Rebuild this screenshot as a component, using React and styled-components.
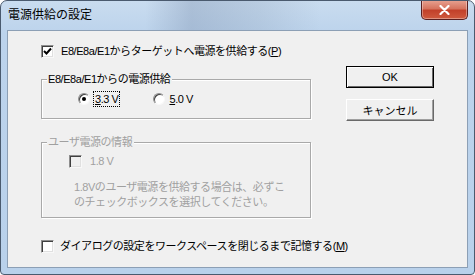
import React from 'react'
import styled, { createGlobalStyle } from 'styled-components'

const GlobalStyle = createGlobalStyle`
  html, body {
    margin: 0;
    padding: 0;
    background: #ffffff;
  }
  body {
    font-family: "Liberation Sans", "Noto Sans CJK JP", sans-serif;
    font-size: 11px;
    letter-spacing: -0.45px;
    color: #000;
  }
`

const Frame = styled.div`
  width: 475px;
  height: 275px;
  box-sizing: border-box;
  border: 1px solid #4a5a6e;
  border-radius: 7px 7px 4px 4px;
  background: linear-gradient(180deg, #c9dcef 0%, #bcd3ec 12%, #b9d1eb 100%);
  display: flex;
  flex-direction: column;
  padding: 0 6px 6px 6px;
  overflow: hidden;
`

const TitleBar = styled.div`
  height: 29px;
  display: flex;
  align-items: flex-start;
  background: linear-gradient(90deg, transparent 0%, transparent 30%, rgba(120,140,170,0.35) 40%, rgba(140,160,185,0.25) 55%, transparent 68%);
`

const Title = styled.div`
  font-size: 12px;
  letter-spacing: 0;
  line-height: 12px;
  margin: 8px 0 0 1px;
  color: #000;
`

const CloseButton = styled.div`
  margin-left: auto;
  margin-top: -1px;
  width: 45px;
  height: 19px;
  border: 1px solid #5a2020;
  border-top: none;
  border-radius: 0 0 5px 5px;
  background: linear-gradient(180deg, #e8a493 0%, #d6745f 45%, #c2412a 55%, #cf5a3e 100%);
  display: flex;
  align-items: center;
  justify-content: center;
  box-shadow: inset 0 0 0 1px rgba(255,255,255,0.35);
`

const Client = styled.div`
  flex: 1;
  border: 1px solid #8c9fb5;
  background: #f0f0f0;
  display: flex;
  flex-direction: column;
  padding: 14px 0 0 33px;
`

const Body = styled.div`
  display: flex;
  align-items: flex-start;
`

const LeftCol = styled.div`
  width: 270px;
  display: flex;
  flex-direction: column;
`

const RightCol = styled.div`
  margin-left: 35px;
  margin-top: 21px;
  display: flex;
  flex-direction: column;
  gap: 11px;
`

const CheckRow = styled.label`
  display: flex;
  align-items: center;
  gap: ${({ gap }) => gap || 6}px;
  height: 13px;
  line-height: 13px;
  margin-left: ${({ indent }) => indent || 0}px;
  color: ${({ disabled }) => (disabled ? '#a0a0a0' : '#000')};
  white-space: nowrap;
`

const Box = styled.span`
  width: 13px;
  height: 13px;
  box-sizing: border-box;
  border: 1px solid;
  border-color: #8e8e8e #f8f8f8 #f8f8f8 #8e8e8e;
  box-shadow: inset 1px 1px 0 #404040, inset -1px -1px 0 #e0e0e0;
  background: ${({ disabled }) => (disabled ? '#f0f0f0' : '#ffffff')};
  display: flex;
  align-items: center;
  justify-content: center;
  flex-shrink: 0;
`

const Group = styled.div`
  position: relative;
  border: 1px solid #a9a9a9;
  box-shadow: 1px 1px 0 #ffffff, inset 1px 1px 0 #ffffff;
  height: ${({ h }) => h}px;
  box-sizing: border-box;
  margin-top: ${({ top }) => top}px;
  padding-top: ${({ pt }) => pt}px;
`

const Legend = styled.span`
  position: absolute;
  top: -8px;
  left: 5px;
  padding: 0 2px 0 1px;
  background: #f0f0f0;
  line-height: 14px;
  color: ${({ disabled }) => (disabled ? '#a0a0a0' : '#000')};
`

const RadioRow = styled.div`
  display: flex;
  align-items: center;
  padding-left: 36px;
  gap: 34px;
`

const RadioItem = styled.label`
  display: flex;
  align-items: center;
  gap: 4px;
  height: 14px;
  line-height: 14px;
`

const Radio = styled.span`
  width: 12px;
  height: 12px;
  box-sizing: border-box;
  border-radius: 50%;
  border: 1px solid;
  border-color: #8e8e8e #f8f8f8 #f8f8f8 #8e8e8e;
  box-shadow: inset 1px 1px 0 #404040;
  background: #fff;
  display: flex;
  align-items: center;
  justify-content: center;
  &::after {
    content: '';
    width: 4px;
    height: 4px;
    border-radius: 50%;
    background: ${({ checked }) => (checked ? '#000' : 'transparent')};
  }
`

const Focus = styled.span`
  outline: 1px dotted #000;
  outline-offset: 0;
  padding: 0 1px;
`

const Note = styled.div`
  color: #a0a0a0;
  line-height: 15px;
  margin: 12px 0 0 32px;
  white-space: nowrap;
`

const Button = styled.button`
  width: 88px;
  height: 22px;
  box-sizing: border-box;
  font-family: inherit;
  font-size: 11px;
  letter-spacing: 0;
  background: #f0f0f0;
  border: 1px solid;
  border-color: ${({ primary }) => (primary ? '#000 #000 #000 #000' : '#ffffff #696969 #696969 #ffffff')};
  box-shadow: ${({ primary }) =>
    primary
      ? 'inset 1px 1px 0 #ffffff, inset -1px -1px 0 #696969'
      : 'inset -1px -1px 0 #a0a0a0'};
  padding: 0;
  color: #000;
`

const Ul = styled.span`
  text-decoration: underline;
`

const Footer = styled.div`
  margin-top: 22px;
`

const Check = () => (
  <svg width="9" height="9" viewBox="0 0 9 9">
    <path d="M1 4 L3.5 6.5 L8 1.5" stroke="#000" strokeWidth="2" fill="none" />
  </svg>
)

const CloseX = () => (
  <svg width="11" height="10" viewBox="0 0 11 10">
    <path d="M1.5 1 L9.5 9 M9.5 1 L1.5 9" stroke="#fff" strokeWidth="2.2" strokeLinecap="round" />
  </svg>
)

const App = () => (
  <>
    <GlobalStyle />
    <Frame>
      <TitleBar>
        <Title>電源供給の設定</Title>
        <CloseButton>
          <CloseX />
        </CloseButton>
      </TitleBar>
      <Client>
        <Body>
          <LeftCol>
            <CheckRow gap={7}>
              <Box><Check /></Box>
              <span>E8/E8a/E1からターゲットへ電源を供給する(<Ul>P</Ul>)</span>
            </CheckRow>
            <Group h={40} top={21} pt={12}>
              <Legend>E8/E8a/E1からの電源供給</Legend>
              <RadioRow>
                <RadioItem>
                  <Radio checked />
                  <Focus><Ul>3</Ul>.3 V</Focus>
                </RadioItem>
                <RadioItem>
                  <Radio />
                  <span><Ul>5</Ul>.0 V</span>
                </RadioItem>
              </RadioRow>
            </Group>
            <Group h={76} top={23} pt={12}>
              <Legend disabled>ユーザ電源の情報</Legend>
              <CheckRow indent={27} gap={8} disabled>
                <Box disabled />
                <span>1.8 V</span>
              </CheckRow>
              <Note>
                1.8Vのユーザ電源を供給する場合は、必ずこ
                <br />
                のチェックボックスを選択してください。
              </Note>
            </Group>
          </LeftCol>
          <RightCol>
            <Button primary>OK</Button>
            <Button>キャンセル</Button>
          </RightCol>
        </Body>
        <Footer>
          <CheckRow gap={6}>
            <Box />
            <span>ダイアログの設定をワークスペースを閉じるまで記憶する(<Ul>M</Ul>)</span>
          </CheckRow>
        </Footer>
      </Client>
    </Frame>
  </>
)

export default App
